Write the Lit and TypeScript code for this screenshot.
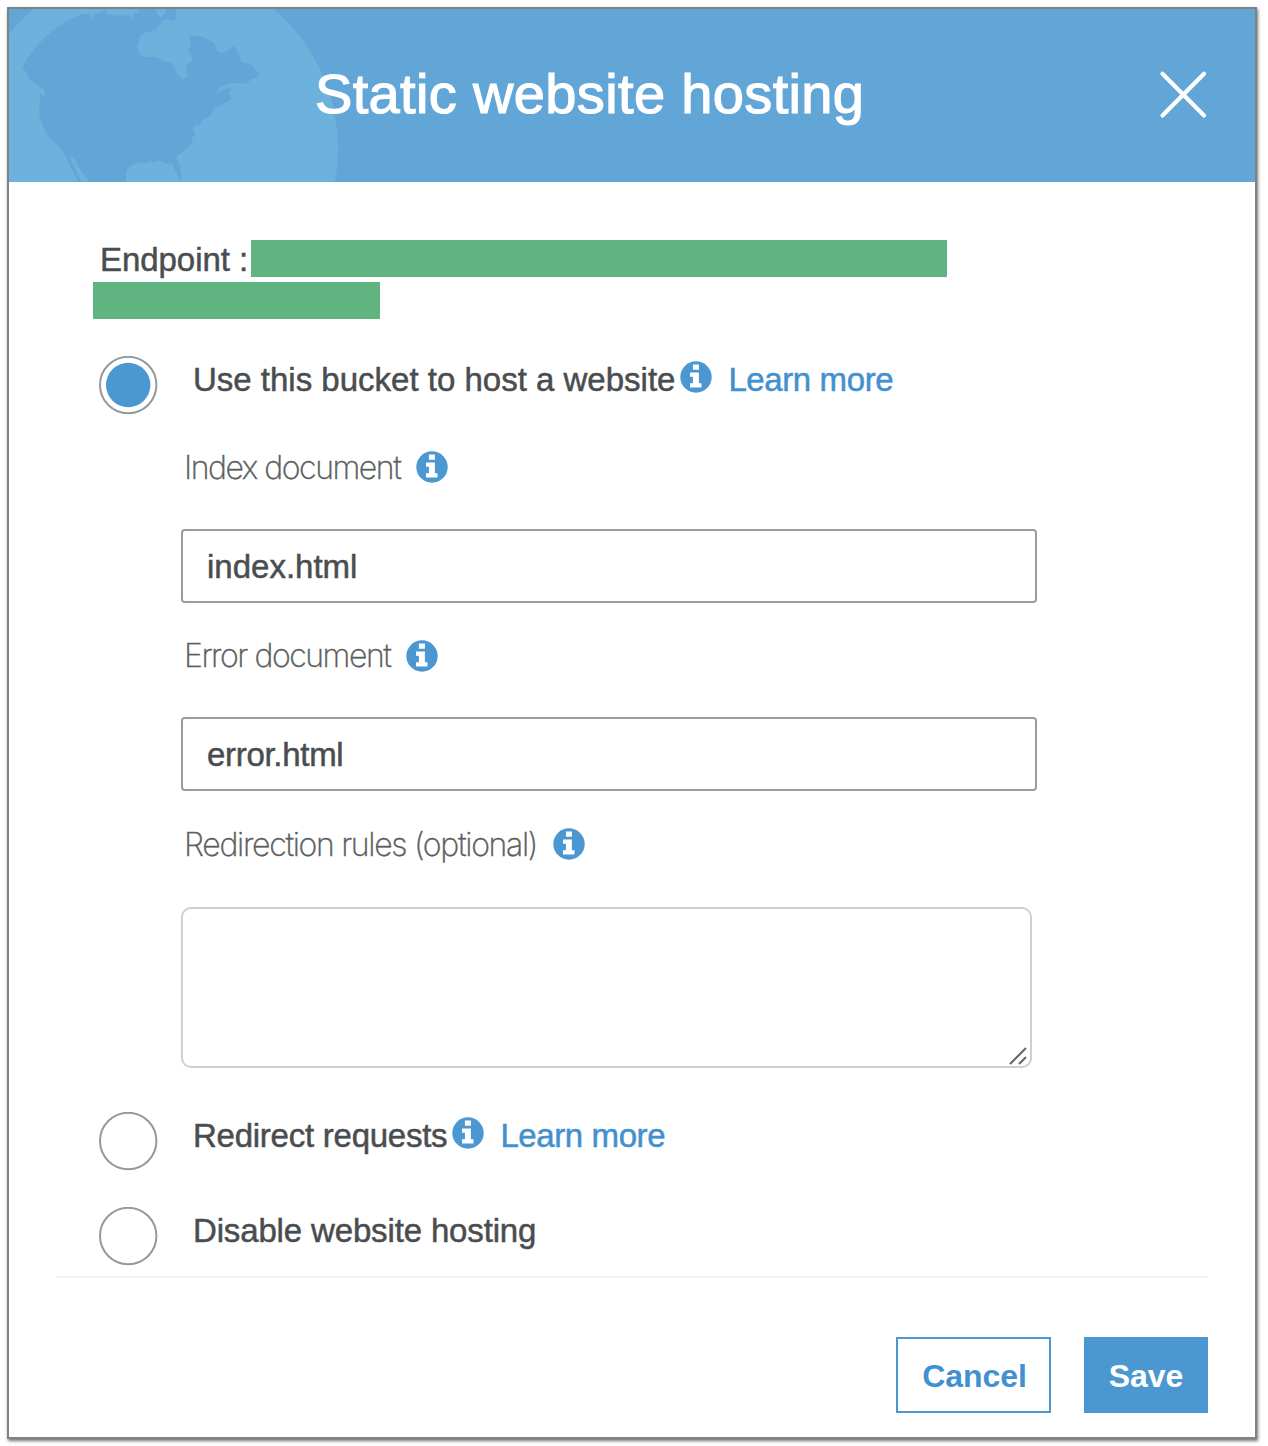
import { LitElement, html, css, svg } from "lit";
import { customElement, property } from "lit/decorators.js";

@customElement("info-icon")
class InfoIcon extends LitElement {
  static styles = css`
    :host { display: block; width: 32px; height: 32px; flex: none; }
    svg { display: block; }
  `;
  render() {
    return html`<svg width="32" height="32" viewBox="0 0 32 32">
      <circle cx="16" cy="16" r="15.7" fill="#4a97d2" />
      <path fill="#fff" d="M12.9 3.6h6v5.2h-6zM10 11.4h8.9v10.9h2.6v4.3h-11.5v-4.3h2.9v-6.6h-2.9z" />
    </svg>`;
  }
}

@customElement("radio-dot")
class RadioDot extends LitElement {
  @property({ type: Boolean }) checked = false;
  static styles = css`
    :host { display: block; width: 59px; height: 59px; flex: none; }
    svg { display: block; }
  `;
  render() {
    return html`<svg width="59" height="59" viewBox="0 0 59 59">
      <circle cx="29.2" cy="29" r="28.2" fill="#fff" stroke="#929a9c" stroke-width="2" />
      ${this.checked ? svg`<circle cx="29.2" cy="29" r="22.2" fill="#4a97d2" />` : null}
    </svg>`;
  }
}

@customElement("app-root")
class AppRoot extends LitElement {
  static styles = css`
    :host {
      display: block;
      box-sizing: border-box;
      height: 1446px;
      padding: 7px 0 0 7px;
      background: #fff;
      overflow: hidden;
      font-family: "Liberation Sans", Arial, sans-serif;
      font-size: 33px;
      line-height: 38px;
      color: #4a4d4f;
    }
    * { box-sizing: border-box; }
    .dialog {
      width: 1250px;
      height: 1432px;
      border: 2px solid #828282;
      box-shadow: 1px 2px 3px rgba(0, 0, 0, 0.55);
      background: #fff;
    }
    .header {
      position: relative;
      height: 173px;
      display: flex;
      align-items: flex-start;
      justify-content: space-between;
      padding: 0 47px 0 306px;
      background: #62a6d8;
    }
    .globe { position: absolute; left: 0; top: 0; }
    .title {
      position: relative;
      margin: 53px 0 0;
      font-size: 56px;
      line-height: 64px;
      font-weight: 400;
      letter-spacing: 0.35px;
      color: #fff;
      -webkit-text-stroke: 1.2px #fff;
      white-space: nowrap;
    }
    .close { display: block; margin-top: 60px; border: 0; padding: 0; background: none; }
    .close svg { display: block; }
    .body { padding: 58px 47px 0; }
    .text { white-space: nowrap; -webkit-text-stroke: 0.5px currentColor; letter-spacing: 0; }
    .endpoint { display: flex; align-items: flex-start; height: 37px; padding-left: 44px; }
    .endpoint .text { width: 151px; margin-top: 1px; letter-spacing: -0.05px; }
    .bar { height: 37px; background: #60b47f; }
    .bar.first { width: 696px; }
    .bar.second { width: 287px; margin: 5px 0 0 37px; }
    .option { display: flex; align-items: flex-start; height: 59px; padding-left: 43px; }
    .option .text { margin: 5px 0 0 35px; }
    .option info-icon { margin: 5px 0 0 5px; }
    .option .link { margin: 5px 0 0 16px; color: #4190d0; text-decoration: none; letter-spacing: -0.4px; }
    .option .requests { letter-spacing: -0.25px; }
    .option .disable { letter-spacing: -0.15px; }
    .label {
      display: flex;
      align-items: flex-start;
      gap: 16px;
      height: 38px;
      padding-left: 128px;
      font-family: Inter, "Liberation Sans", sans-serif;
      font-weight: 200;
      font-size: 32px;
      letter-spacing: -1.45px;
      color: #5a5e60;
      -webkit-text-stroke: 0.4px currentColor;
      white-space: nowrap;
    }
    .label info-icon { margin-top: 2px; }
    .label.rules { letter-spacing: -1.3px; }
    .label.error info-icon { margin-top: 3px; }
    .input, .area {
      display: block;
      margin-left: 125px;
      font: inherit;
      color: inherit;
      background: #fff;
      outline: none;
    }
    .input {
      width: 856px;
      height: 74px;
      padding: 2px 24px 0;
      border: 2px solid #969e9f;
      border-radius: 4px;
      -webkit-text-stroke: 0.5px currentColor;
    }
    .input.narrow { letter-spacing: -0.3px; }
    .area-wrap { position: relative; width: 976px; }
    .area { width: 851px; height: 161px; resize: none; border: 2px solid #cfcfcf; border-radius: 10px; }
    .grip { position: absolute; right: 3px; bottom: 2px; }
    .divider { height: 2px; margin-top: 10px; background: #f2f4f4; }
    .actions { display: flex; justify-content: flex-end; gap: 33px; margin-top: 59px; }
    .button {
      height: 76px;
      padding: 2px 0 0;
      font: bold 32px/38px "Liberation Sans", Arial, sans-serif;
      letter-spacing: -0.1px;
      border: 2px solid #4a97d2;
      border-radius: 0;
      background: #fff;
      color: #4190d0;
    }
    .cancel { width: 155px; padding-left: 2px; }
    .save { width: 124px; background: #4a97d2; color: #fff; }
    .gap-option { margin-top: 37px; }
    .gap-index { margin-top: 34px; }
    .gap-input { margin-top: 42px; }
    .gap-error { margin-top: 34px; }
    .gap-rules { margin-top: 35px; }
    .gap-area { margin-top: 43px; }
    .gap-redirect { margin-top: 44px; }
    .gap-disable { margin-top: 36px; }
  `;

  render() {
    return html`
      <div class="dialog" role="dialog">
        <div class="header">
          <svg class="globe" width="341" height="173" viewBox="9 9 341 173">
            <circle cx="153.5" cy="149" r="184.5" fill="#6db1dd" />
            <path transform="scale(.33333)" fill="#62a6d8" d="M66 203C100 140 170 65 254 40L270 46 279 61 284 40 306 37 314 27 325 44 355 47 388 45 395 62 402 42 418 37 412 27H468L474 48 482 54 498 36 496 27H527L528 60 518 64 505 58 490 59 478 76 465 92 440 95 422 108 411 140 416 160 428 171 462 170 495 183 520 193 531 222 548 239 562 228 556 202 580 177 562 150 574 140 568 108C600 104 632 117 646 134L650 150 662 158 682 153 698 138 711 149 726 188 752 192 766 208 780 222 770 234 752 238 740 252C712 245 680 250 660 262L643 286 668 268 692 263 696 270 687 280 696 293 688 302 665 314 640 328 634 344 618 355 604 362 602 375 583 377 578 392 588 405 576 412C582 435 560 448 535 465L529 475 540 495 545 535 540 540 528 520 516 490 500 492 484 483 468 482 455 488 448 478V490L418 487 395 495 378 513V547H270L245 515 225 480 210 466 215 485 245 547H236L212 500 185 447 150 415C120 375 110 330 122 295L117 278 132 288 136 272 105 250 88 238 76 212Z" />
          </svg>
          <h1 class="title">Static website hosting</h1>
          <button class="close" aria-label="Close">
            <svg width="50" height="50" viewBox="0 0 50 50" fill="none" stroke="#fff" stroke-width="4.2" stroke-linecap="round">
              <path d="M4.5 4.8 46 46.5M46 4.8 4.5 46.5" />
            </svg>
          </button>
        </div>
        <div class="body">
          <div class="endpoint"><span class="text">Endpoint :</span><div class="bar first"></div></div>
          <div class="bar second"></div>

          <div class="option gap-option">
            <radio-dot checked></radio-dot>
            <span class="text">Use this bucket to host a website</span>
            <info-icon></info-icon>
            <a class="text link">Learn more</a>
          </div>

          <div class="label gap-index"><span>Index document</span><info-icon></info-icon></div>
          <input class="input gap-input" value="index.html" />
          <div class="label error gap-error"><span>Error document</span><info-icon></info-icon></div>
          <input class="input narrow gap-input" value="error.html" />
          <div class="label rules gap-rules"><span>Redirection rules (optional)</span><info-icon></info-icon></div>
          <div class="area-wrap gap-area">
            <textarea class="area"></textarea>
            <svg class="grip" width="20" height="20" viewBox="0 0 20 20" stroke="#666" stroke-width="2">
              <path d="M1 18 17 2M10 18 17 11" />
            </svg>
          </div>

          <div class="option gap-redirect">
            <radio-dot></radio-dot>
            <span class="text requests">Redirect requests</span>
            <info-icon></info-icon>
            <a class="text link">Learn more</a>
          </div>
          <div class="option gap-disable">
            <radio-dot></radio-dot>
            <span class="text disable">Disable website hosting</span>
          </div>
          <div class="divider"></div>
          <div class="actions">
            <button class="button cancel">Cancel</button>
            <button class="button save">Save</button>
          </div>
        </div>
      </div>
    `;
  }
}
